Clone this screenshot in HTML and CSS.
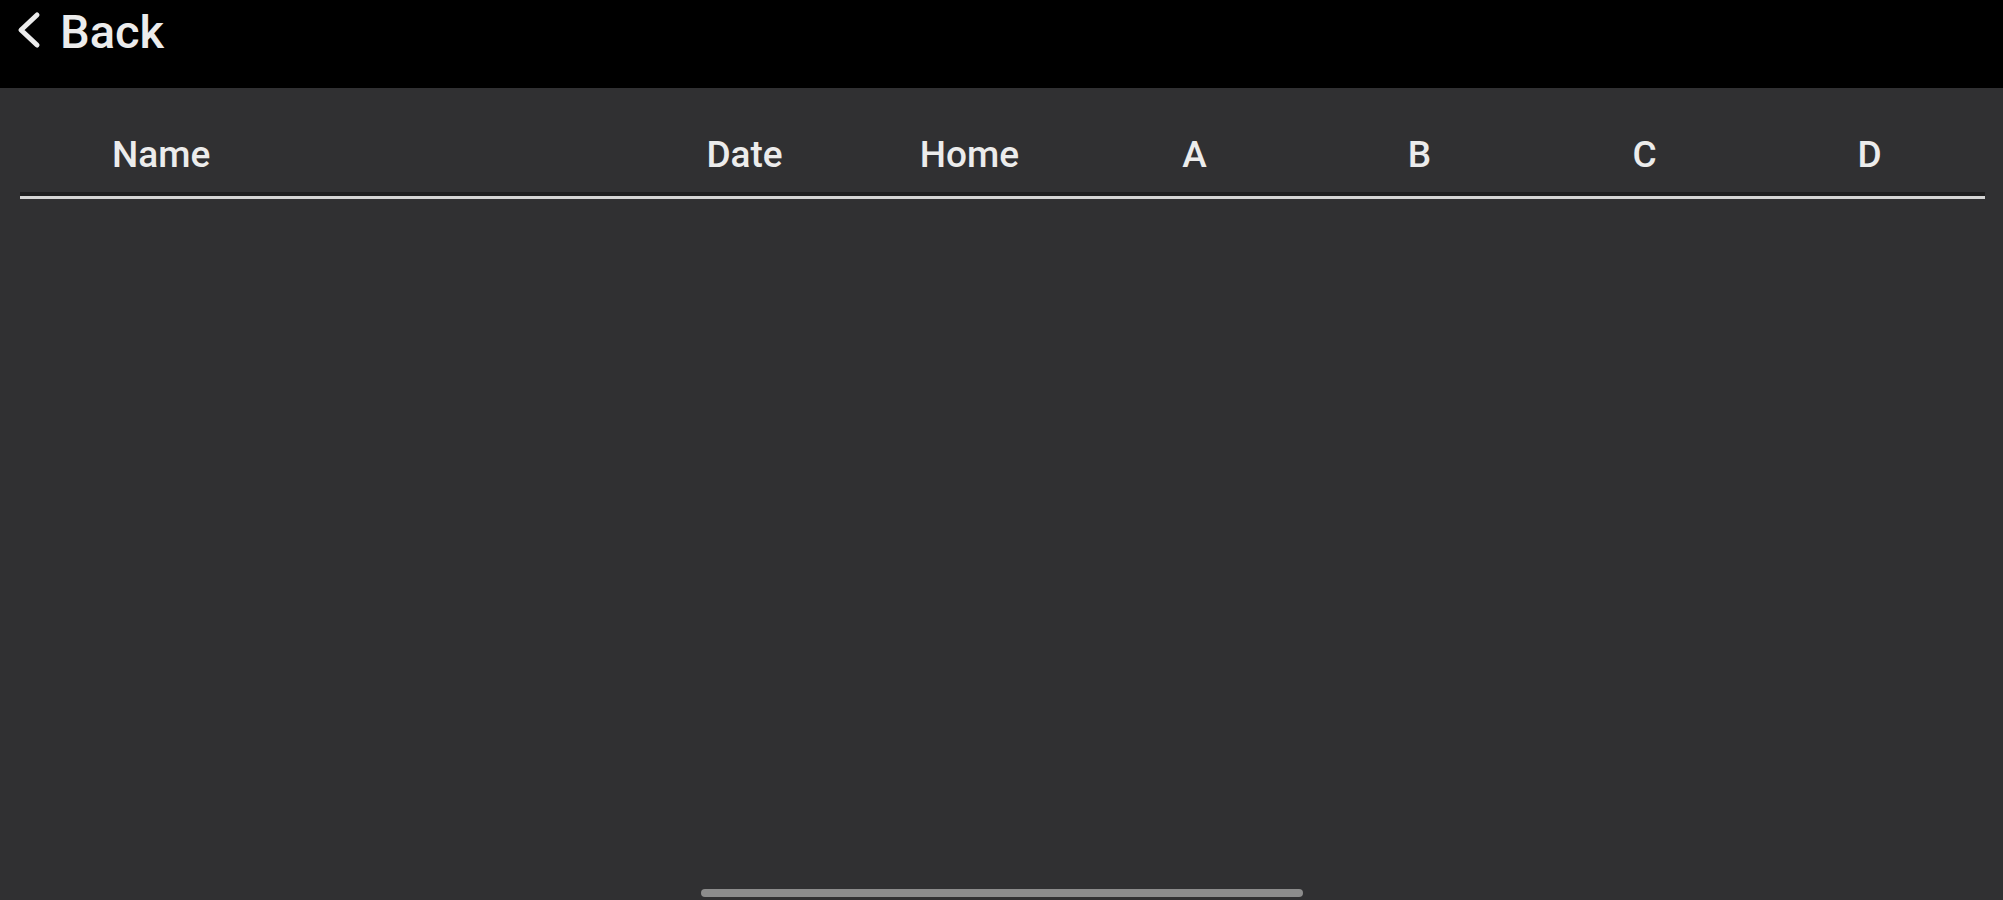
FILE: index.html
```html
<!DOCTYPE html>
<html>
<head>
    <title>Results</title>
    <link rel="stylesheet" href="styles.css">
</head>
<body>

    <header class="top-bar">
        <a class="back-link" href="#">
            <svg class="back-icon" width="26" height="38" viewBox="0 0 26 38">
                <polyline points="21,4 5,19 21,34" fill="none" stroke="#ececec" stroke-width="5" stroke-linecap="round" stroke-linejoin="round"/>
            </svg>
            <span>Back</span>
        </a>
    </header>

    <div class="table-section">
        <div class="table-head">
            <div class="col col-name">Name</div>
            <div class="col">Date</div>
            <div class="col">Home</div>
            <div class="col">A</div>
            <div class="col">B</div>
            <div class="col">C</div>
            <div class="col">D</div>
        </div>
        <div class="table-body"></div>
    </div>

    <div class="home-bar"></div>

</body>
</html>
```

FILE: styles.css
```css
body {
    margin: 0;
    height: 900px;
    background-color: #303032;
    font-family: Roboto, "Noto Sans", sans-serif;
    color: #ececec;
    overflow: hidden;
    position: relative;
}

.top-bar {
    height: 88px;
    box-sizing: border-box;
    background-color: #000;
    padding: 8px 0 0 16px;
}

.back-link {
    display: flex;
    align-items: flex-start;
    gap: 18px;
    color: #ececec;
    text-decoration: none;
    font-size: 47px;
    line-height: 47px;
    font-weight: 500;
}

.back-icon {
    margin-top: 3px;
}

.table-section {
    padding: 0 18px 0 20px;
}

.table-head {
    display: flex;
    position: relative;
    padding-top: 48px;
    padding-bottom: 22px;
    border-bottom: 3px solid #d4d4d4;
    font-size: 37px;
    line-height: 38px;
    font-weight: 500;
}

/* dark edge above the divider */
.table-head::after {
    content: "";
    position: absolute;
    left: 0;
    right: 0;
    bottom: 0;
    height: 4px;
    background-color: #1e1e1f;
}

.col {
    width: 225px;
    text-align: center;
}

.col-name {
    width: 612px;
    padding-left: 92px;
    box-sizing: border-box;
    text-align: left;
}

.home-bar {
    position: absolute;
    left: 701px;
    bottom: 3px;
    width: 602px;
    height: 8px;
    border-radius: 4px;
    background-color: #8c8c8c;
}
```
